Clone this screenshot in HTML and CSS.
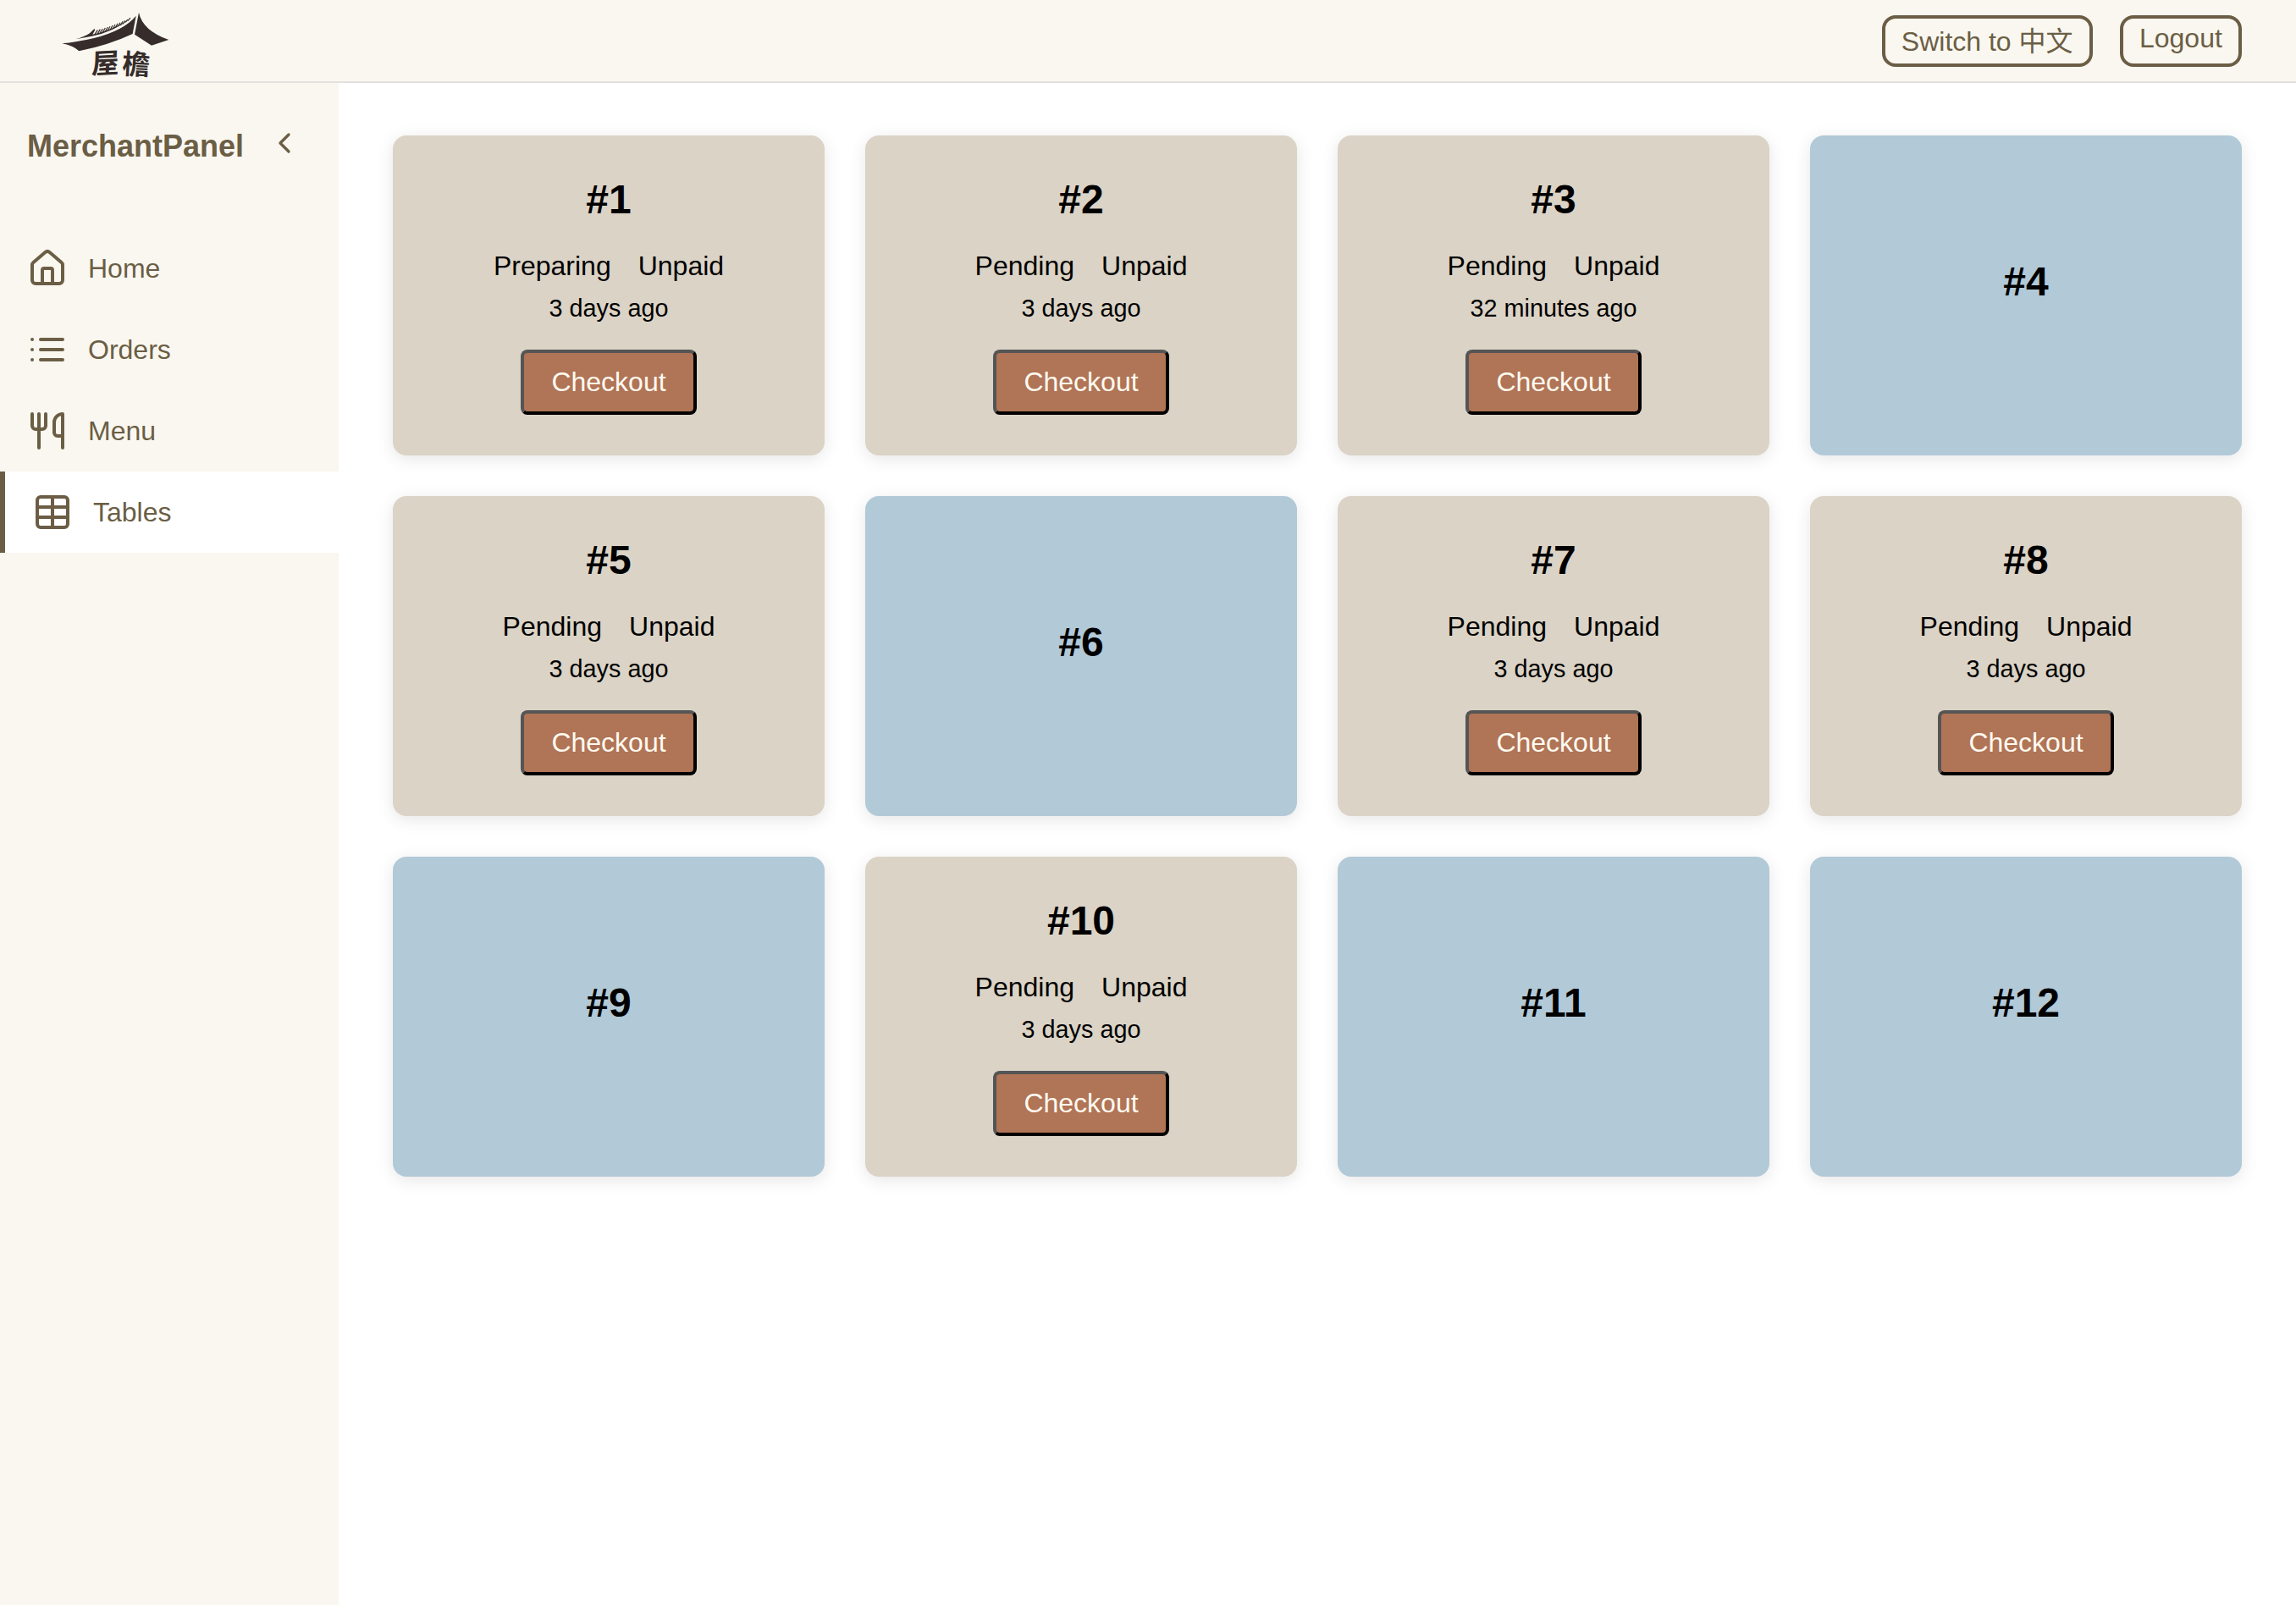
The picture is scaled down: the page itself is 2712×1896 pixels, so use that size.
FILE: index.html
```html
<!DOCTYPE html>
<html lang="en">
<head>
<meta charset="utf-8">
<title>MerchantPanel</title>
<link rel="stylesheet" href="styles.css">
</head>
<body>
<header class="topbar">
  <svg class="logo" viewBox="216 36 384 240" role="img" aria-label="屋檐">
    <path d="M220 154Q270 150 330 136Q440 108 482 56L470 120Q385 160 280 181Q260 162 220 154Z"/>
    <path d="M492 44Q505 108 598 141L537 161L477 122Z"/>
    <path d="M268 139Q300 130 318 118L334 102L337 106L328 122Q395 108 462 66Q400 114 326 128Z"/>
    <path class="tiles" d="M336 122l10-16M346 119l9-15M355 116l9-14M364 114l9-15M373 111l9-15M382 108l8-14M391 105l8-15M400 102l8-15M409 98l8-15M418 94l8-14M427 90l8-14M436 85l7-12M445 79l7-10M453 74l9-11"/>
    <text class="logo-text" x="0" y="0" transform="translate(323 262) rotate(-3) skewX(-5)">屋</text>
    <text class="logo-text" x="0" y="0" transform="translate(431 261) rotate(3)">檐</text>
  </svg>
  <div class="actions">
    <button class="action action-lang">Switch to 中文</button>
    <button class="action">Logout</button>
  </div>
</header>
<div class="layout">
  <aside class="sidebar">
    <div class="brand">
      <span>MerchantPanel</span>
      <svg class="chevron" viewBox="0 0 24 24"><path d="m15 18-6-6 6-6"/></svg>
    </div>
    <nav class="nav">
      <a class="item"><svg class="icon" viewBox="0 0 24 24"><path d="M15 21v-8a1 1 0 0 0-1-1h-4a1 1 0 0 0-1 1v8"/><path d="M3 10a2 2 0 0 1 .709-1.528l7-5.999a2 2 0 0 1 2.582 0l7 5.999A2 2 0 0 1 21 10v9a2 2 0 0 1-2 2H5a2 2 0 0 1-2-2z"/></svg><span>Home</span></a>
      <a class="item"><svg class="icon" viewBox="0 0 24 24"><path d="M3 6h.01M3 12h.01M3 18h.01M8 6h13M8 12h13M8 18h13"/></svg><span>Orders</span></a>
      <a class="item"><svg class="icon" viewBox="0 0 24 24"><path d="M3 2v7c0 1.1.9 2 2 2h4a2 2 0 0 0 2-2V2"/><path d="M7 2v20"/><path d="M21 15V2a5 5 0 0 0-5 5v6c0 1.1.9 2 2 2h3Zm0 0v7"/></svg><span>Menu</span></a>
      <a class="item active"><svg class="icon" viewBox="0 0 24 24"><path d="M12 3v18M3 9h18M3 15h18"/><rect width="18" height="18" x="3" y="3" rx="2"/></svg><span>Tables</span></a>
    </nav>
  </aside>
  <main class="tables">
    <section class="card"><h2>#1</h2><div class="status"><span>Preparing</span><span>Unpaid</span></div><p class="time">3 days ago</p><button class="checkout">Checkout</button></section>
    <section class="card"><h2>#2</h2><div class="status"><span>Pending</span><span>Unpaid</span></div><p class="time">3 days ago</p><button class="checkout">Checkout</button></section>
    <section class="card"><h2>#3</h2><div class="status"><span>Pending</span><span>Unpaid</span></div><p class="time">32 minutes ago</p><button class="checkout">Checkout</button></section>
    <section class="card free"><h2>#4</h2></section>
    <section class="card"><h2>#5</h2><div class="status"><span>Pending</span><span>Unpaid</span></div><p class="time">3 days ago</p><button class="checkout">Checkout</button></section>
    <section class="card free"><h2>#6</h2></section>
    <section class="card"><h2>#7</h2><div class="status"><span>Pending</span><span>Unpaid</span></div><p class="time">3 days ago</p><button class="checkout">Checkout</button></section>
    <section class="card"><h2>#8</h2><div class="status"><span>Pending</span><span>Unpaid</span></div><p class="time">3 days ago</p><button class="checkout">Checkout</button></section>
    <section class="card free"><h2>#9</h2></section>
    <section class="card"><h2>#10</h2><div class="status"><span>Pending</span><span>Unpaid</span></div><p class="time">3 days ago</p><button class="checkout">Checkout</button></section>
    <section class="card free"><h2>#11</h2></section>
    <section class="card free"><h2>#12</h2></section>
  </main>
</div>
</body>
</html>
```
FILE: styles.css
```css
* { box-sizing: border-box; }

body {
  margin: 0;
  min-height: 100vh;
  display: flex;
  flex-direction: column;
  background: #fff;
  color: #000;
  font: 32px/37px "Liberation Sans", "Noto Sans CJK SC", sans-serif;
}

button { font: inherit; }

/* Top bar */
.topbar {
  height: 98px;
  flex: none;
  display: flex;
  justify-content: space-between;
  align-items: flex-start;
  padding: 0 64px 0 72px;
  background: #faf7f0;
  border-bottom: 2px solid #e3e1df;
}

.logo {
  width: 128px;
  height: 80px;
  margin-top: 12px;
  overflow: visible;
  fill: #352c2b;
}

.tiles { fill: none; stroke: #352c2b; stroke-width: 3.5; }

.logo-text { font: 700 98px "Noto Sans CJK SC", sans-serif; }

.actions { display: flex; gap: 32px; margin-top: 18px; }

.action {
  display: flex;
  align-items: flex-start;
  height: 61px;
  padding: 5px 19.2px 0;
  border: 4px solid #6b5e45;
  border-radius: 16px;
  background: transparent;
  color: #6b5e45;
  white-space: nowrap;
}

.action-lang { padding-top: 9px; }

/* Sidebar */
.layout { flex: 1; display: flex; }

.sidebar {
  width: 400px;
  flex: none;
  background: #faf7f0;
  color: #6b5e45;
}

.brand {
  height: 171px;
  display: flex;
  justify-content: space-between;
  align-items: flex-start;
  padding: 51px 44px 0 32px;
  font-size: 36px;
  font-weight: 700;
  line-height: 42px;
}

.brand span { padding-top: 3px; }

.chevron { width: 40px; height: 40px; }

.chevron, .icon {
  flex: none;
  fill: none;
  stroke: currentColor;
  stroke-width: 2;
  stroke-linecap: round;
  stroke-linejoin: round;
}

.item {
  height: 96px;
  display: flex;
  align-items: center;
  gap: 24px;
  padding: 0 32px;
}

.item span { padding-top: 1px; }

.icon { width: 48px; height: 48px; }

.active { background: #fff; border-left: 6px solid #6b5e45; }

/* Tables */
.tables {
  flex: 1;
  display: grid;
  grid-template-columns: repeat(4, 1fr);
  grid-auto-rows: 378px;
  align-content: start;
  gap: 48px;
  padding: 62px 64px;
}

.card {
  display: flex;
  flex-direction: column;
  align-items: center;
  padding: 48px;
  border-radius: 16px;
  background: #dbd3c6;
  box-shadow: 0 4px 20px rgba(0, 0, 0, 0.1);
}

.free { justify-content: center; padding-bottom: 80px; background: #b2c9d7; }

.card h2 { margin: 0; font-size: 48px; line-height: 56px; }

.status { display: flex; gap: 32px; margin-top: 32px; }

.time { margin: 15px 0 32px; font-size: 28.8px; line-height: 33px; }

.checkout {
  height: 77px;
  padding: 16px 32px;
  border: 4px solid;
  border-color: #555 #000 #000 #555;
  border-radius: 8px;
  background: #b07456;
  color: #fffaf0;
  line-height: 37px;
}
```
